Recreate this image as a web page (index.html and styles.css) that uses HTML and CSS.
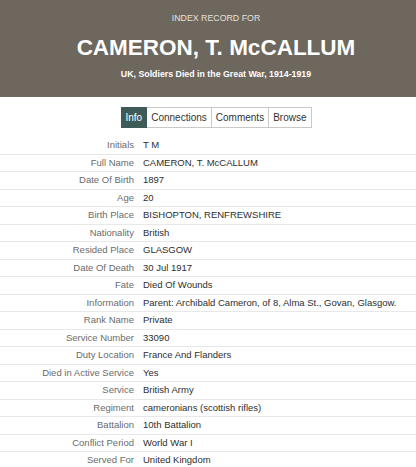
FILE: index.html
```html
<!DOCTYPE html>
<html lang="en">
<head>
    <meta charset="UTF-8">
    <meta name="viewport" content="width=device-width, initial-scale=1.0">
    <title>Index Record</title>
    <link rel="stylesheet" href="styles.css">
</head>
<body>
    <div class="record-header">
        <div class="kicker">INDEX RECORD FOR</div>
        <h1>CAMERON, T. McCALLUM</h1>
        <div class="collection">UK, Soldiers Died in the Great War, 1914-1919</div>
    </div>

    <div class="tabs">
        <span class="tab active">Info</span>
        <span class="tab">Connections</span>
        <span class="tab">Comments</span>
        <span class="tab">Browse</span>
    </div>

    <!-- record fields -->
    <div class="record-info">
        <div class="row"><span class="label">Initials</span><span class="value">T M</span></div>
        <div class="row"><span class="label">Full Name</span><span class="value">CAMERON, T. McCALLUM</span></div>
        <div class="row"><span class="label">Date Of Birth</span><span class="value">1897</span></div>
        <div class="row"><span class="label">Age</span><span class="value">20</span></div>
        <div class="row"><span class="label">Birth Place</span><span class="value">BISHOPTON, RENFREWSHIRE</span></div>
        <div class="row"><span class="label">Nationality</span><span class="value">British</span></div>
        <div class="row"><span class="label">Resided Place</span><span class="value">GLASGOW</span></div>
        <div class="row"><span class="label">Date Of Death</span><span class="value">30 Jul 1917</span></div>
        <div class="row"><span class="label">Fate</span><span class="value">Died Of Wounds</span></div>
        <div class="row"><span class="label">Information</span><span class="value">Parent: Archibald Cameron, of 8, Alma St., Govan, Glasgow.</span></div>
        <div class="row"><span class="label">Rank Name</span><span class="value">Private</span></div>
        <div class="row"><span class="label">Service Number</span><span class="value">33090</span></div>
        <div class="row"><span class="label">Duty Location</span><span class="value">France And Flanders</span></div>
        <div class="row"><span class="label">Died in Active Service</span><span class="value">Yes</span></div>
        <div class="row"><span class="label">Service</span><span class="value">British Army</span></div>
        <div class="row"><span class="label">Regiment</span><span class="value">cameronians (scottish rifles)</span></div>
        <div class="row"><span class="label">Battalion</span><span class="value">10th Battalion</span></div>
        <div class="row"><span class="label">Conflict Period</span><span class="value">World War I</span></div>
        <div class="row"><span class="label">Served For</span><span class="value">United Kingdom</span></div>
    </div>
</body>
</html>
```

FILE: styles.css
```css
body {
    margin: 0;
    font-family: "Liberation Sans", Arial, sans-serif;
    background: #fff;
    color: #333;
}

.record-header {
    background-color: #6e675e;
    color: #fff;
    text-align: center;
    padding: 12px 0 17px 16px;
    height: 68px;
}
.kicker {
    font-size: 8.8px;
    color: #e4e0dc;
    line-height: 12px;
}
.record-header h1 {
    margin: 9px 0 0;
    font-size: 22.5px;
    line-height: 30px;
    font-weight: 700;
}
.collection {
    margin-top: 5px;
    font-size: 8.8px;
    font-weight: 700;
    line-height: 12px;
}

.tabs {
    display: flex;
    justify-content: center;
    margin: 10px 0 9px;
    padding-left: 16px;
}
.tab {
    font-size: 10px;
    line-height: 19px;
    padding: 0 4px;
    border: 1px solid #c9c9c9;
    border-left: none;
    color: #333;
}
.tab:first-child {
    border-left: 1px solid #c9c9c9;
}
.tab.active {
    background-color: #3e5b58;
    border-color: #3e5b58;
    color: #fff;
}

.row {
    display: flex;
    border-bottom: 1px solid #e8e8e8;
    font-size: 9.5px;
    line-height: 16.5px;
}
.row:last-child {
    border-bottom: none;
}
.label {
    width: 134px;
    text-align: right;
    color: #6b6b6b;
    flex-shrink: 0;
}
.value {
    padding-left: 9px;
    color: #2e2e2e;
}
```
